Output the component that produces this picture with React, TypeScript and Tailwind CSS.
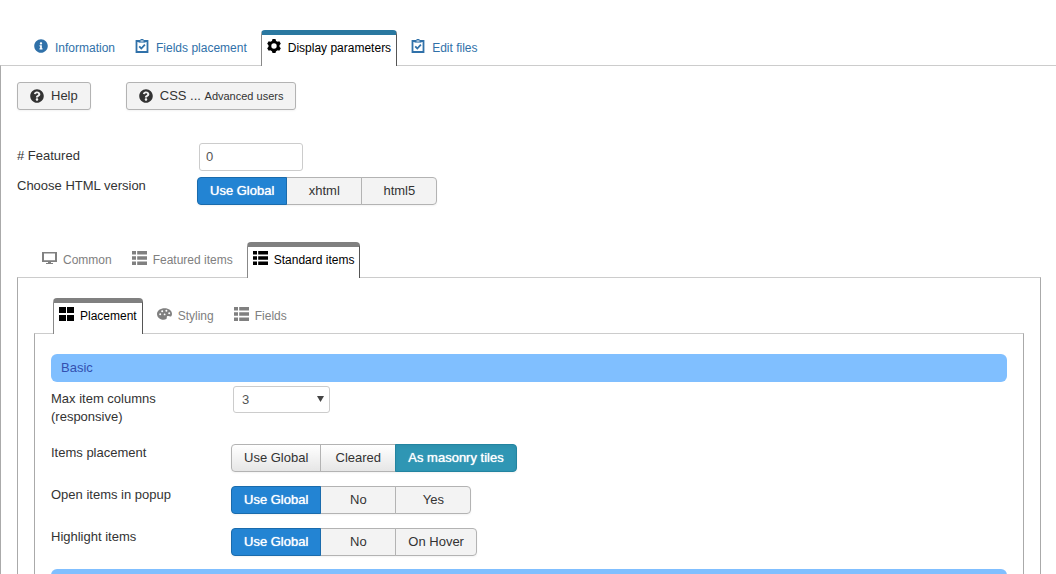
import React, { useState } from "react";
import { FaInfoCircle, FaQuestionCircle } from "react-icons/fa";

function ClipboardIcon() {
  return (
    <svg width="14" height="14" viewBox="0 0 14 14" fill="none" stroke="currentColor">
      <path d="M1.500 2v11h11V2z" strokeWidth="1.8" />
      <path d="M3.500 1h7v2.600h-7z" fill="currentColor" stroke="none" />
      <path d="M5.500 0h3v2h-3z" fill="currentColor" stroke="none" />
      <path d="M5.500 2h3" stroke="white" />
      <path d="M4.200 7.400l2.100 2.100 3.600-3.800" strokeWidth="1.8" />
    </svg>
  );
}

function GearIcon() {
  return (
    <svg width="14" height="14" viewBox="0 0 14 14" fill="none" stroke="currentColor">
      <circle cx="7" cy="7" r="4.1" strokeWidth="2.8" />
      {[0, 60, 120, 180, 240, 300].map((angle) => (
        <path
          key={angle}
          d="M4.800 2.600L5.500 0h3l.7 2.600z"
          fill="currentColor"
          stroke="none"
          transform={`rotate(${angle} 7 7)`}
        />
      ))}
    </svg>
  );
}

function ScreenIcon() {
  return (
    <svg width="15" height="14" viewBox="0 0 15 14" fill="currentColor">
      <path fillRule="evenodd" d="M0 1h15v10H0zM2 2.6v6.6h11V2.6z" />
      <path d="M6 11h3v1h2v1H4v-1h2z" />
    </svg>
  );
}

function ListIcon() {
  return (
    <svg width="15" height="14" viewBox="0 0 15 14" fill="currentColor">
      <path d="M0 0h4v3.6H0zM5.2 0H15v3.6H5.2zM0 5.2h4v3.6H0zM5.2 5.2H15v3.6H5.2zM0 10.4h4V14H0zM5.2 10.4H15V14H5.2z" />
    </svg>
  );
}

function GridIcon() {
  return (
    <svg width="15" height="14" viewBox="0 0 15 14" fill="currentColor">
      <path d="M0 0h7v6H0zM8 0h7v6H8zM0 8h7v6H0zM8 8h7v6H8z" />
    </svg>
  );
}

function PaletteIcon() {
  return (
    <svg width="15" height="14" viewBox="0 0 15 14" fill="currentColor">
      <path d="M7.600 1.200C3.400 1.200 0 3.600 0 7c0 3 2.800 5.800 6.600 5.800 2.300 0 3.400-.9 3.200-2.200-.2-1.100.4-1.700 1.500-1.500 1.200.2 2 .7 2.700.3.700-.5 1-1.500 1-2.600 0-3.300-3.200-5.600-7.400-5.600z" />
      <g fill="white">
        <circle cx="3.2" cy="7.3" r="1" />
        <circle cx="5.2" cy="4.2" r="1" />
        <circle cx="9.4" cy="3.8" r="1" />
        <circle cx="12.2" cy="6.2" r="1" />
        <circle cx="7.600" cy="7.400" r="0.9" />
      </g>
    </svg>
  );
}

type Tab = { name: string; icon: React.ReactNode };

const mainTabs: Tab[] = [
  { name: "Information", icon: <FaInfoCircle size={14} /> },
  { name: "Fields placement", icon: <ClipboardIcon /> },
  { name: "Display parameters", icon: <GearIcon /> },
  { name: "Edit files", icon: <ClipboardIcon /> },
];

const itemTabs: Tab[] = [
  { name: "Common", icon: <ScreenIcon /> },
  { name: "Featured items", icon: <ListIcon /> },
  { name: "Standard items", icon: <ListIcon /> },
];

const sectionTabs: Tab[] = [
  { name: "Placement", icon: <GridIcon /> },
  { name: "Styling", icon: <PaletteIcon /> },
  { name: "Fields", icon: <ListIcon /> },
];

function Tabs({ tabs, initial, main }: { tabs: Tab[]; initial: string; main?: boolean }) {
  const [active, setActive] = useState(initial);
  const activeColor = main ? "border-t-[#2a78a0]" : "border-t-[#808080]";
  const idleColor = main ? "text-[#3071a9]" : "text-[#808080]";

  return (
    <div role="tablist" className={`relative -mb-px flex gap-2 ${main ? "pl-7" : "pl-[19px]"}`}>
      {tabs.map((tab) => (
        <button
          key={tab.name}
          type="button"
          role="tab"
          aria-selected={tab.name === active}
          onClick={() => setActive(tab.name)}
          className={`flex h-9 items-start rounded-t border-x border-t-5 px-[5px] pt-1 text-xs whitespace-nowrap ${
            main ? "gap-[7px]" : "gap-1.5"
          } ${
            tab.name === active
              ? `border-r-[#555] border-l-[#888] bg-white text-black ${activeColor}`
              : `border-transparent ${idleColor}`
          }`}
        >
          <span className="flex h-3.5 items-center">{tab.icon}</span>
          <span className="leading-[18px]">{tab.name}</span>
        </button>
      ))}
    </div>
  );
}

type RadioProps = {
  label: string;
  options: string[];
  initial: string;
  raised?: boolean;
};

function RadioRow({ label, options, initial, raised }: RadioProps) {
  const [value, setValue] = useState(initial);
  const idle = raised
    ? "border-[#b3b3b3] bg-linear-to-b from-white to-[#e6e6e6]"
    : "border-[#b3b3b3] bg-[#f3f3f3]";
  const selected = raised
    ? "z-10 border-[#2384a0] bg-[#2f96b4] text-white shadow-inner text-shadow-[0_0_1px_#fff]"
    : "z-10 border-[#1a6bac] bg-[#2384d3] text-white text-shadow-[0_0_1px_#fff]";

  return (
    <fieldset className="flex items-start">
      <legend className="float-left w-[180px] leading-[18px]">{label}</legend>
      <div className="flex rounded shadow-xs">
        {options.map((option) => (
          <label
            key={option}
            className={`relative -ml-px flex h-7 min-w-[76px] cursor-pointer items-center justify-center border px-3 whitespace-nowrap first:ml-0 first:rounded-l last:rounded-r ${
              option === value ? selected : idle
            }`}
          >
            <input
              type="radio"
              name={label}
              value={option}
              checked={option === value}
              onChange={() => setValue(option)}
              className="sr-only"
            />
            {option}
          </label>
        ))}
      </div>
    </fieldset>
  );
}

function HelpButton({ children }: { children: React.ReactNode }) {
  return (
    <button
      type="button"
      className="flex h-7 items-center gap-[7px] rounded-[3px] border border-[#b3b3b3] bg-[#f3f3f3] px-3 whitespace-nowrap shadow-xs"
    >
      <FaQuestionCircle size={14} />
      {children}
    </button>
  );
}

function SectionTitle({ children }: { children?: React.ReactNode }) {
  return (
    <div className="flex h-7 items-center rounded-md bg-[#80bfff] px-2.5 text-[#3350b0]">
      {children}
    </div>
  );
}

export default function App() {
  return (
    <div className="bg-white pt-[30px] font-['Liberation_Sans',Arial,sans-serif] text-[13px] leading-[18px] text-[#333]">
      <Tabs tabs={mainTabs} initial="Display parameters" main />
      <main className="border-t border-l border-t-[#ccc] border-l-[#aaa] pt-4 pr-[15px] pl-4">
        <div className="flex gap-[35px]">
          <HelpButton>Help</HelpButton>
          <HelpButton>
            <span>
              CSS ... <small className="text-[11px]">Advanced users</small>
            </span>
          </HelpButton>
        </div>

        <div className="mt-[33px] flex flex-col gap-1.5">
          <div className="flex items-start">
            <label htmlFor="featured" className="w-[182px] pt-1">
              # Featured
            </label>
            <input
              id="featured"
              type="text"
              defaultValue="0"
              className="h-7 w-[104px] rounded-[3px] border border-[#ccc] px-1.5 pb-0.5 text-[#555]"
            />
          </div>
          <RadioRow
            label="Choose HTML version"
            options={["Use Global", "xhtml", "html5"]}
            initial="Use Global"
          />
        </div>

        <div className="mt-[37px]">
          <Tabs tabs={itemTabs} initial="Standard items" />
          <section className="border border-[#aaa] border-t-[#ccc] px-4 pt-5">
            <Tabs tabs={sectionTabs} initial="Placement" />
            <section className="border border-[#aaa] border-t-[#ccc] px-4 pt-5">
              <SectionTitle>
                <h3>Basic</h3>
              </SectionTitle>
              <div className="mt-1 mb-[13px] flex flex-col gap-3.5">
                <div className="flex min-h-11 items-start">
                  <label htmlFor="columns" className="w-[182px] pt-1 pr-12">
                    Max item columns (responsive)
                  </label>
                  <div className="relative">
                    <select
                      id="columns"
                      defaultValue="3"
                      className="h-[27px] w-[97px] appearance-none rounded-[3px] border border-[#ccc] bg-white px-2 text-[#555]"
                    >
                      <option>1</option>
                      <option>2</option>
                      <option>3</option>
                      <option>4</option>
                    </select>
                    <svg
                      className="pointer-events-none absolute top-2.5 right-1.5"
                      width="7"
                      height="6"
                      viewBox="0 0 7 6"
                      fill="#444"
                    >
                      <path d="M0 0h7L3.5 6z" />
                    </svg>
                  </div>
                </div>
                <RadioRow
                  label="Items placement"
                  options={["Use Global", "Cleared", "As masonry tiles"]}
                  initial="As masonry tiles"
                  raised
                />
                <RadioRow
                  label="Open items in popup"
                  options={["Use Global", "No", "Yes"]}
                  initial="Use Global"
                />
                <RadioRow
                  label="Highlight items"
                  options={["Use Global", "No", "On Hover"]}
                  initial="Use Global"
                />
              </div>
              <SectionTitle />
            </section>
          </section>
        </div>
      </main>
    </div>
  );
}
